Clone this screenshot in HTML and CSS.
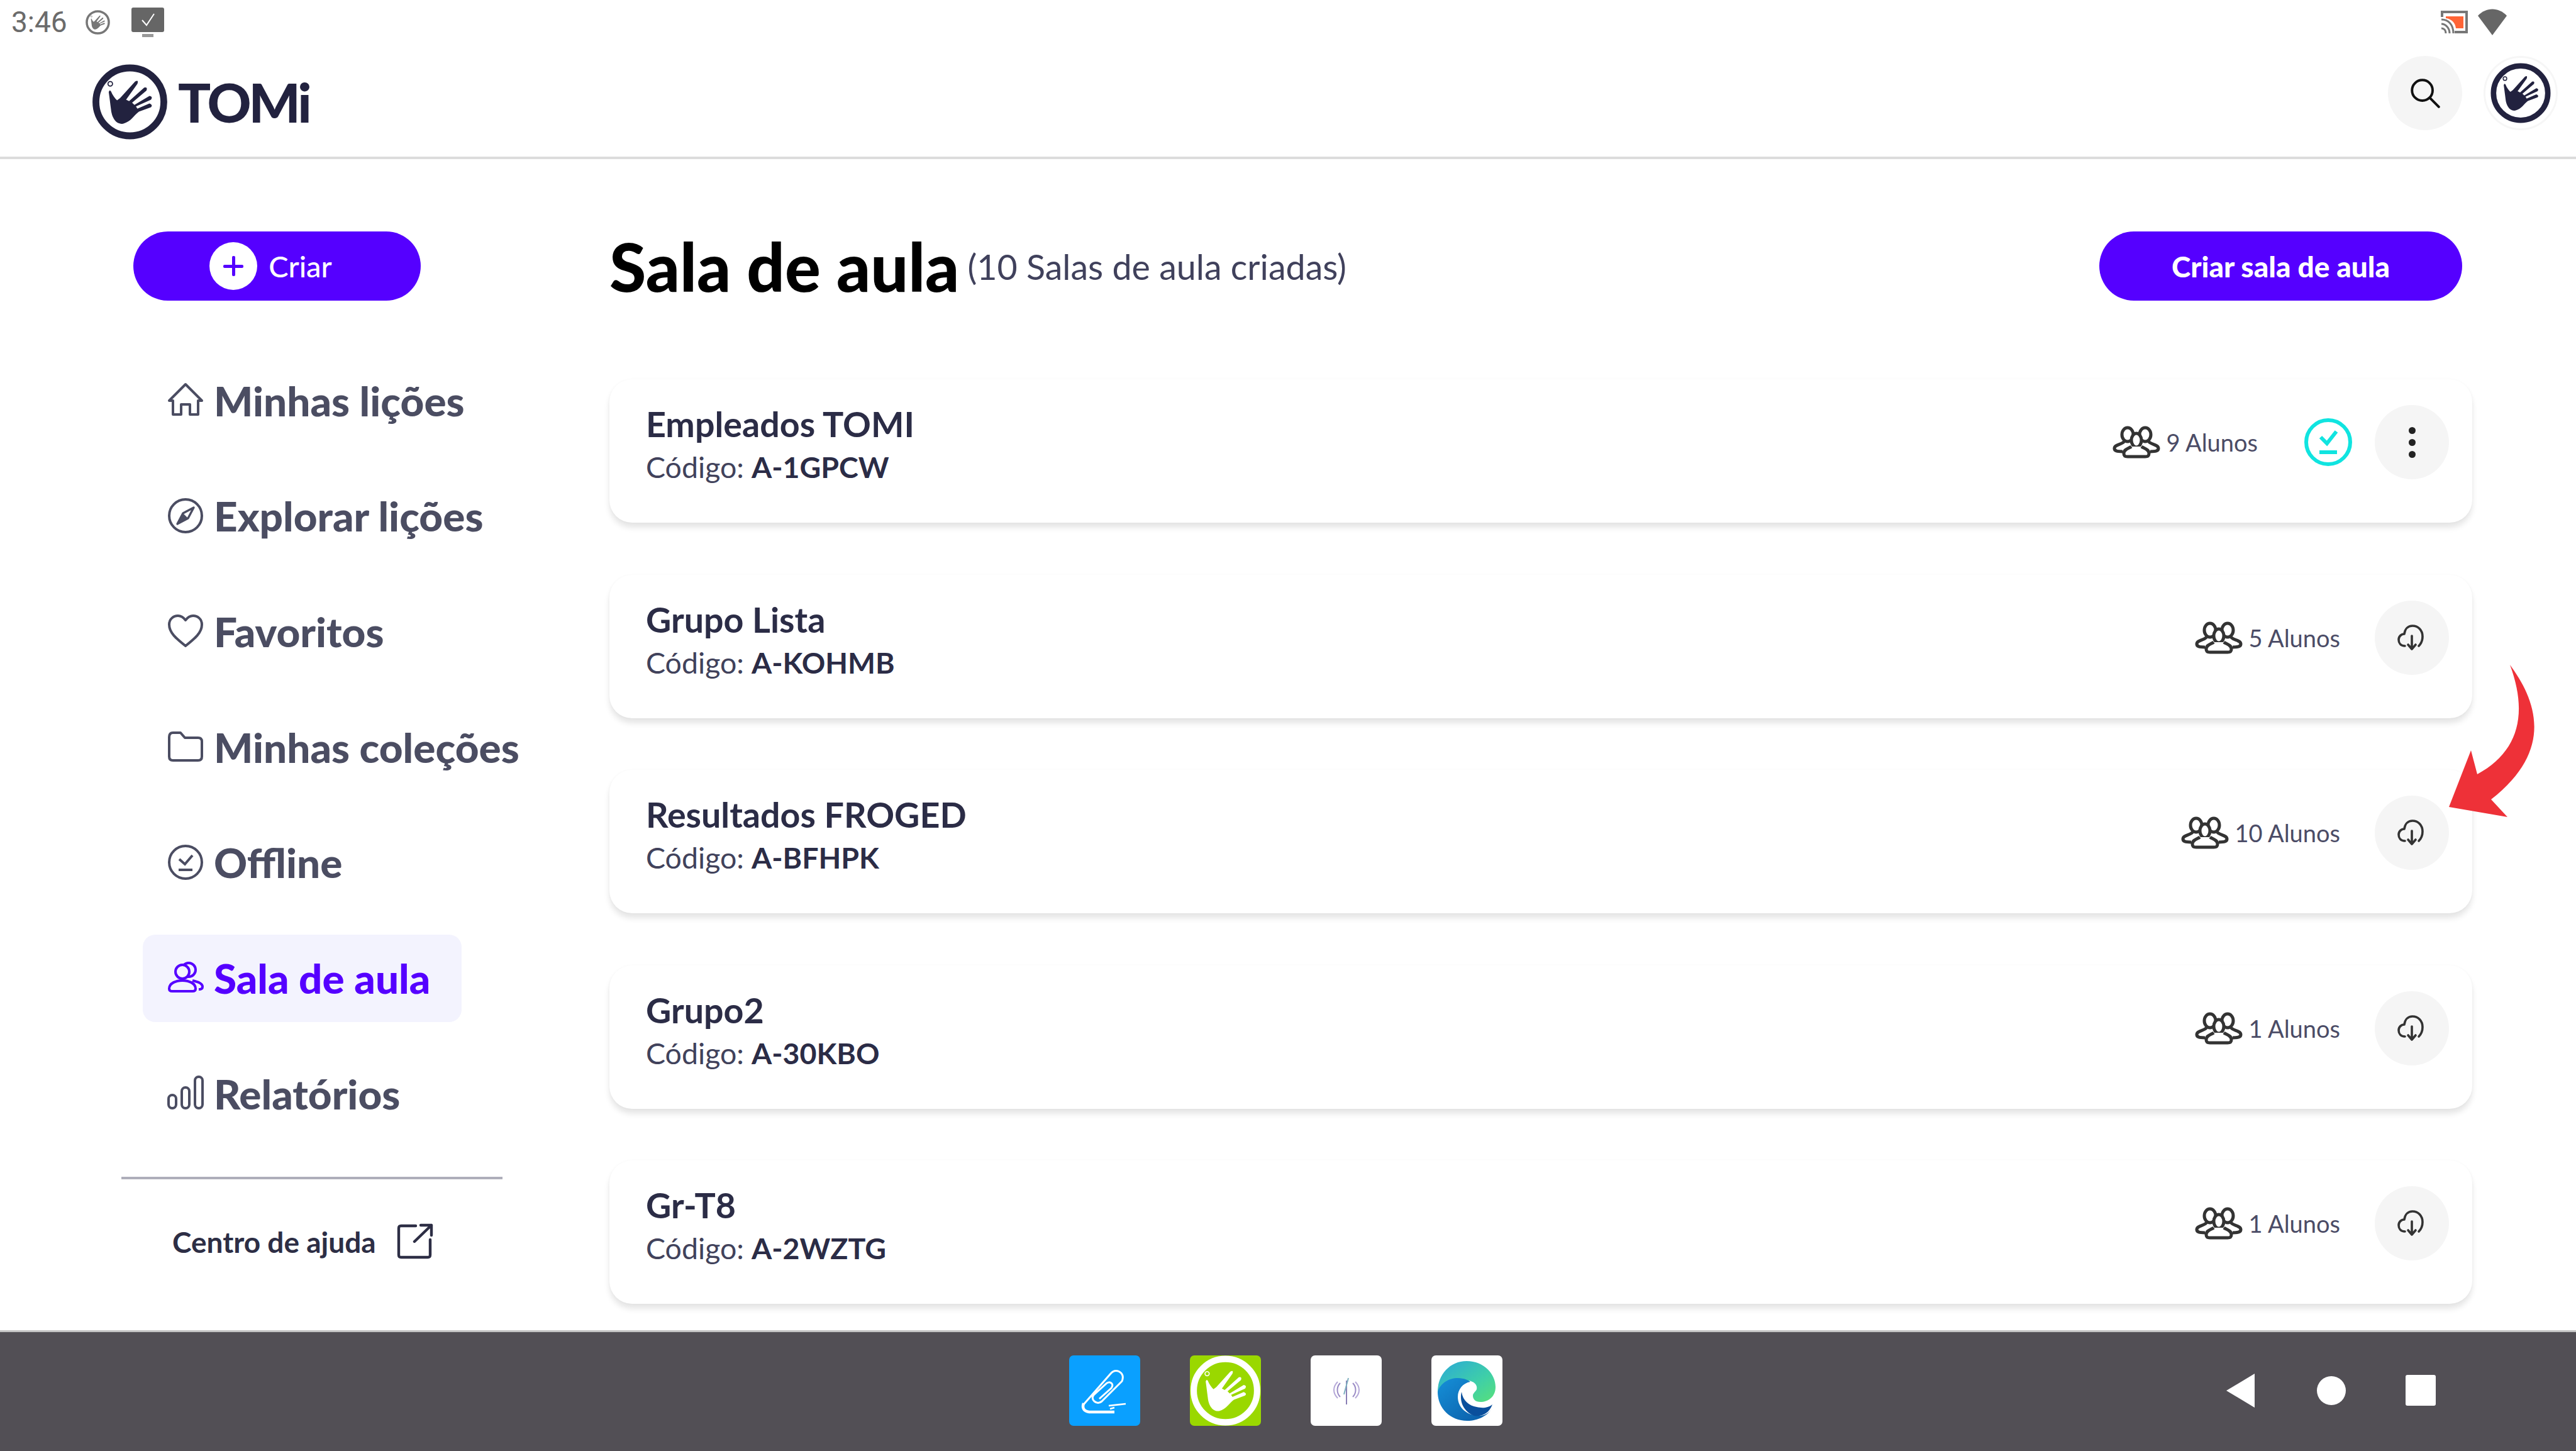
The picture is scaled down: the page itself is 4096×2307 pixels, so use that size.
FILE: index.html
```html
<!DOCTYPE html>
<html lang="pt">
  <head>
    <meta charset="UTF-8" />
    <title>TOMi - Sala de aula</title>
    <link rel="stylesheet" href="styles.css">
  </head>
  <body>
    <!-- shared icons -->
    <svg class="sprite" xmlns="http://www.w3.org/2000/svg">
      <symbol id="hand" viewBox="0 0 100 100">
        <path d="M25 36C27 41 30 45 33 48L37 45L57 23Q62 20 60 26L45 47L49 49L69 31Q74 30 72 35L53 51L56 54L76 42Q81 43 78 47L58 56L60 59L76 52Q81 54 78 57L62 63C55 68 52 76 41 79C31 80 26 70 25 60C24 52 23 44 22 37Q23 33 25 36Z" fill="currentColor"/>
        <circle cx="24" cy="26" r="3" fill="none" stroke="currentColor" stroke-width="1.5"/>
      </symbol>
      <symbol id="logo" viewBox="0 0 100 100">
        <ellipse cx="50" cy="50" rx="45" ry="45" fill="none" stroke="currentColor" stroke-width="9"/>
        <use href="#hand" width="100" height="100"/>
      </symbol>
      <symbol id="group" viewBox="0 0 76 52">
        <g fill="none" stroke="currentColor" stroke-width="5">
          <ellipse cx="24" cy="14" rx="9" ry="11"/>
          <ellipse cx="52" cy="14" rx="9" ry="11"/>
          <path d="M19 24C17 30 3 29 3 36C3 40 7 41 16 41"/>
          <path d="M57 24C59 30 73 29 73 36C73 40 69 41 60 41"/>
          <ellipse cx="38" cy="23" rx="8" ry="11" fill="#fff"/>
          <path d="M30 33C26 36 18 37 18 44C18 48 20 49 24 49H52C56 49 58 48 58 44C58 37 50 36 46 33" fill="#fff"/>
        </g>
      </symbol>
      <symbol id="cloud" viewBox="0 0 48 48">
        <g fill="none" stroke="currentColor" stroke-width="3.6" stroke-linecap="round" stroke-linejoin="round">
          <path d="M13 37C6 37 3 32 3 27C3 22 7 18 12 18C13 10 18 5 25 5C34 5 41 12 41 22C41 28 39 33 35 37"/>
          <path d="M24 21V41M18 35L24 42L30 35"/>
        </g>
      </symbol>
    </svg>

    <div class="status-bar">
      <div class="status-left">
        <span class="clock">3:46</span>
        <svg class="status-logo"><use href="#logo"/></svg>
        <svg class="status-monitor" viewBox="0 0 52 47">
          <rect x="0" y="0" width="52" height="39" rx="3" fill="#666"/>
          <rect x="17" y="42" width="18" height="5" fill="#999"/>
          <path d="M17 20L24 28L36 10" fill="none" stroke="#fff" stroke-width="2"/>
        </svg>
      </div>
      <div class="status-right">
        <svg class="status-cast" viewBox="0 0 43 36">
          <path d="M2 10V2H41V34H22" fill="none" stroke="#777" stroke-width="4"/>
          <path d="M8 9H36V28H24C23 19 17 13 8 12Z" fill="#ff6436"/>
          <path d="M1 14C12 14 20 22 20 36M1 21C8 21 14 28 14 36M1 28C5 28 8 31 8 36" fill="none" stroke="#777" stroke-width="3"/>
        </svg>
        <svg class="status-wifi" viewBox="0 0 46 42"><path d="M0 11C13 -3 33 -3 46 11L23 42Z" fill="#666"/></svg>
      </div>
    </div>

    <header class="topbar">
      <div class="brand">
        <svg class="brand-mark"><use href="#logo"/></svg>
        <span class="brand-name">TOMi</span>
      </div>
      <div class="topbar-actions">
        <div class="round-btn">
          <svg class="search-icon" viewBox="0 0 44 44">
            <circle cx="18" cy="18" r="15" fill="none" stroke="#111" stroke-width="3.6"/>
            <path d="M29 29L42 42" stroke="#111" stroke-width="3.6" stroke-linecap="round"/>
          </svg>
        </div>
        <div class="avatar"><svg class="avatar-mark"><use href="#logo"/></svg></div>
      </div>
    </header>

    <main class="layout">
      <aside class="sidebar">
        <button class="create-btn">
          <span class="create-plus"></span>
          Criar
        </button>

        <nav class="side-nav">
          <a class="nav-item">
            <svg class="nav-icon" viewBox="0 0 58 58"><path d="M3 30L29 4L55 30L49 30V52H36V36H22V52H9V30Z" fill="none" stroke="currentColor" stroke-width="4" stroke-linejoin="round"/></svg>
            Minhas lições
          </a>
          <a class="nav-item">
            <svg class="nav-icon" viewBox="0 0 58 58">
              <circle cx="29" cy="29" r="26" fill="none" stroke="currentColor" stroke-width="4"/>
              <path d="M42 16L33 33L16 42L25 25Z" fill="none" stroke="currentColor" stroke-width="3.4" stroke-linejoin="round"/>
              <path d="M25 25L16 42L33 33Z" fill="currentColor"/>
            </svg>
            Explorar lições
          </a>
          <a class="nav-item">
            <svg class="nav-icon" viewBox="0 0 58 58"><path d="M29 53C14 41 3 32 3 19C3 10 10 5 17 5C22 5 26 8 29 12C32 8 36 5 41 5C48 5 55 10 55 19C55 32 44 41 29 53Z" fill="none" stroke="currentColor" stroke-width="4" stroke-linejoin="round"/></svg>
            Favoritos
          </a>
          <a class="nav-item">
            <svg class="nav-icon" viewBox="0 0 58 58"><path d="M3 14C3 9 5 7 9 7H21L28 15H49C53 15 55 17 55 21V45C55 49 53 51 49 51H9C5 51 3 49 3 45Z" fill="none" stroke="currentColor" stroke-width="4" stroke-linejoin="round"/></svg>
            Minhas coleções
          </a>
          <a class="nav-item">
            <svg class="nav-icon" viewBox="0 0 58 58">
              <circle cx="29" cy="29" r="26" fill="none" stroke="currentColor" stroke-width="4"/>
              <path d="M19 24L28 32L40 18M18 41H40" fill="none" stroke="currentColor" stroke-width="4"/>
            </svg>
            Offline
          </a>
          <a class="nav-item active">
            <svg class="nav-icon" viewBox="0 0 58 58" fill="none" stroke="currentColor" stroke-width="4">
              <circle cx="34" cy="17" r="11"/>
              <circle cx="24" cy="20" r="11" fill="#f3f3fe"/>
              <path d="M40 34C48 36 56 38 56 44C56 47 54 48 50 48"/>
              <path d="M3 47C3 38 14 34 24 34C34 34 45 38 45 47C45 50 43 51 40 51H8C5 51 3 50 3 47Z" fill="#f3f3fe"/>
            </svg>
            Sala de aula
          </a>
          <a class="nav-item">
            <svg class="nav-icon" viewBox="0 0 58 58" fill="none" stroke="currentColor" stroke-width="4">
              <rect x="2" y="32" width="12" height="21" rx="6"/>
              <rect x="23" y="20" width="12" height="33" rx="6"/>
              <rect x="44" y="3" width="12" height="50" rx="6"/>
            </svg>
            Relatórios
          </a>
        </nav>

        <div class="side-divider"></div>

        <a class="help-link">
          Centro de ajuda
          <svg class="help-icon" viewBox="0 0 58 58" fill="none" stroke="currentColor" stroke-width="4.4" stroke-linecap="round" stroke-linejoin="round">
            <path d="M30 4H7C4 4 3 5 3 8V50C3 53 4 54 7 54H49C52 54 53 53 53 50V26"/>
            <path d="M55 3L28 29M38 3H55V19"/>
          </svg>
        </a>
      </aside>

      <section class="content">
        <div class="page-head">
          <div class="page-title">
            <h1>Sala de aula</h1>
            <span class="page-count">(10 Salas de aula criadas)</span>
          </div>
          <button class="primary-btn">Criar sala de aula</button>
        </div>

        <div class="room-list">
          <div class="room-card">
            <div class="room-info">
              <div class="room-name">Empleados TOMI</div>
              <div class="room-code">Código: <b>A-1GPCW</b></div>
            </div>
            <div class="room-meta">
              <svg class="group-icon"><use href="#group"/></svg>
              <span class="room-count">9 Alunos</span>
            </div>
            <svg class="saved-badge" viewBox="0 0 78 78" fill="none" stroke="#10e4e0" stroke-width="6">
              <circle cx="39" cy="39" r="35"/>
              <path d="M27 31L37 41L52 22M25 55H53"/>
            </svg>
            <div class="round-btn small">
              <span class="kebab"><i></i><i></i><i></i></span>
            </div>
          </div>

          <div class="room-card">
            <div class="room-info">
              <div class="room-name">Grupo Lista</div>
              <div class="room-code">Código: <b>A-KOHMB</b></div>
            </div>
            <div class="room-meta">
              <svg class="group-icon"><use href="#group"/></svg>
              <span class="room-count">5 Alunos</span>
            </div>
            <div class="round-btn small"><svg class="cloud-icon"><use href="#cloud"/></svg></div>
          </div>

          <div class="room-card">
            <div class="room-info">
              <div class="room-name">Resultados FROGED</div>
              <div class="room-code">Código: <b>A-BFHPK</b></div>
            </div>
            <div class="room-meta">
              <svg class="group-icon"><use href="#group"/></svg>
              <span class="room-count">10 Alunos</span>
            </div>
            <div class="round-btn small"><svg class="cloud-icon"><use href="#cloud"/></svg></div>
          </div>

          <div class="room-card">
            <div class="room-info">
              <div class="room-name">Grupo2</div>
              <div class="room-code">Código: <b>A-30KBO</b></div>
            </div>
            <div class="room-meta">
              <svg class="group-icon"><use href="#group"/></svg>
              <span class="room-count">1 Alunos</span>
            </div>
            <div class="round-btn small"><svg class="cloud-icon"><use href="#cloud"/></svg></div>
          </div>

          <div class="room-card">
            <div class="room-info">
              <div class="room-name">Gr-T8</div>
              <div class="room-code">Código: <b>A-2WZTG</b></div>
            </div>
            <div class="room-meta">
              <svg class="group-icon"><use href="#group"/></svg>
              <span class="room-count">1 Alunos</span>
            </div>
            <div class="round-btn small"><svg class="cloud-icon"><use href="#cloud"/></svg></div>
          </div>
        </div>
      </section>
    </main>

    <footer class="taskbar">
      <div class="dock">
        <div class="app app-blue">
          <svg viewBox="0 0 113 112" fill="none" stroke="#fff">
            <path d="M23 78L66 29Q72 22 80 26Q88 31 84 41L52 73Q46 78 40 73Q35 68 39 63L60 44Q65 41 68 45Q70 48 67 52L48 69" stroke-width="3"/>
            <path d="M23 76Q19 88 32 90H72" stroke-width="4.5"/>
            <path d="M63 80L90 77M65 85L72 83" stroke-width="2.6"/>
          </svg>
        </div>
        <div class="app app-green"><svg class="app-mark"><use href="#logo"/></svg></div>
        <div class="app app-white">
          <svg viewBox="0 0 113 112" fill="none" stroke-width="2">
            <path d="M57 40V78" stroke="#8a7fb5"/>
            <path d="M60 36L53 62" stroke="#7fb0c0"/>
            <path d="M47 44C41 50 41 60 47 66M67 44C73 50 73 60 67 66" stroke="#9a8bc5"/>
            <path d="M43 42C35 50 35 60 43 68M71 42C79 50 79 60 71 68" stroke="#b5a8d8"/>
          </svg>
        </div>
        <div class="app app-white">
          <svg viewBox="0 0 113 112">
            <defs>
              <linearGradient id="edgeTop" x1="0" y1="0" x2="1" y2="1">
                <stop offset="0" stop-color="#2aa8d8"/>
                <stop offset="0.6" stop-color="#3fcfa8"/>
                <stop offset="1" stop-color="#58e07a"/>
              </linearGradient>
              <linearGradient id="edgeLow" x1="0" y1="0" x2="1" y2="1">
                <stop offset="0" stop-color="#1590d8"/>
                <stop offset="1" stop-color="#0b5aa5"/>
              </linearGradient>
            </defs>
            <path d="M10 58C10 30 30 9 56 9C84 9 102 30 102 50C102 66 90 74 78 74C70 74 66 70 66 64C66 60 70 58 72 54C74 46 66 40 56 40C40 40 30 52 28 66C20 72 12 68 10 58Z" fill="url(#edgeTop)"/>
            <path d="M10 58C14 44 28 36 42 36C52 36 60 40 62 42C50 44 42 54 42 66C42 84 58 96 76 96C84 96 92 92 96 84C90 96 74 104 57 104C30 104 10 84 10 58Z" fill="url(#edgeLow)"/>
            <path d="M48 58C44 74 52 90 68 96C80 98 92 92 97 78C90 84 80 84 72 82C60 80 50 72 48 58Z" fill="#0a4f9c"/>
          </svg>
        </div>
      </div>
      <div class="sys-nav">
        <span class="nav-back"></span>
        <span class="nav-home"></span>
        <span class="nav-recent"></span>
      </div>
    </footer>

    <!-- red pointer drawn over the list -->
    <svg class="pointer" viewBox="0 0 160 260">
      <path d="M111 7C150 60 185 140 81 221L107 249L14 233L49 143L59 181C125 145 140 85 111 7Z" fill="#ee3138"/>
    </svg>
  </body>
</html>
```

FILE: styles.css
```css
* {
  box-sizing: border-box;
}

html, body {
  margin: 0;
  padding: 0;
  width: 4096px;
  height: 2307px;
  overflow: hidden;
}

body {
  position: relative;
  display: flex;
  flex-direction: column;
  background: #fff;
  font-family: "Lato", "Liberation Sans", sans-serif;
  color: #2b2c46;
}

.sprite {
  width: 0;
  height: 0;
  position: absolute;
}

/* android status bar */
.status-bar {
  height: 62px;
  display: flex;
  justify-content: space-between;
  align-items: center;
  padding: 8px 110px 0 18px;
}

.status-left, .status-right {
  display: flex;
  align-items: center;
}

.clock {
  font-family: "Roboto", sans-serif;
  font-size: 46px;
  color: #6b6b6b;
  margin-right: 29px;
}

.status-logo {
  width: 39px;
  height: 39px;
  color: #777;
  margin-right: 34px;
}

.status-monitor {
  width: 52px;
  height: 47px;
}

.status-cast {
  width: 43px;
  height: 36px;
  margin-right: 16px;
}

.status-wifi {
  width: 46px;
  height: 42px;
}

/* app header */
.topbar {
  height: 191px;
  display: flex;
  justify-content: space-between;
  align-items: flex-start;
  padding: 0 29px 0 144px;
  border-bottom: 4px solid #dcdcdc;
}

.brand {
  display: flex;
  align-items: center;
  margin-top: 40px;
  color: #22223f;
}

.brand-mark {
  width: 125px;
  height: 120px;
}

.brand-name {
  font-size: 86.5px;
  font-weight: 900;
  letter-spacing: -4px;
  margin-left: 14px;
  line-height: 1;
}

.topbar-actions {
  display: flex;
  gap: 34px;
  margin-top: 27px;
}

.round-btn {
  width: 118px;
  height: 118px;
  border-radius: 50%;
  background: #f5f5f5;
  display: flex;
  align-items: center;
  justify-content: center;
}

.search-icon {
  width: 48px;
  height: 48px;
}

.avatar {
  width: 118px;
  height: 118px;
  border-radius: 50%;
  border: 3px solid #f6f6f6;
  display: flex;
  align-items: center;
  justify-content: center;
  color: #22223f;
}

.avatar-mark {
  width: 96px;
  height: 96px;
}

/* page */
.layout {
  flex: 1;
  display: flex;
  min-height: 0;
  overflow: hidden;
}

.sidebar {
  width: 969px;
  flex: none;
  padding: 115px 0 0 193px;
}

.create-btn {
  width: 457px;
  height: 110px;
  margin-left: 19px;
  border: none;
  border-radius: 55px;
  background: #5500ff;
  color: #fff;
  font-family: inherit;
  font-size: 47px;
  font-weight: 500;
  display: flex;
  align-items: center;
  justify-content: center;
  gap: 18px;
  padding: 0 20px 0 0;
}

.create-plus {
  width: 76px;
  height: 76px;
  border-radius: 50%;
  background: #fff;
  position: relative;
}

.create-plus::before,
.create-plus::after {
  content: "";
  position: absolute;
  background: #5500ff;
  border-radius: 2px;
}

.create-plus::before {
  left: 22px;
  right: 22px;
  top: 36px;
  height: 5px;
}

.create-plus::after {
  top: 22px;
  bottom: 22px;
  left: 36px;
  width: 5px;
}

.side-nav {
  display: flex;
  flex-direction: column;
  gap: 44.7px;
  margin: 90px 0 0 34px;
}

.nav-item {
  width: 507px;
  height: 139px;
  padding: 0 0 3px 39px;
  border-radius: 20px;
  display: flex;
  align-items: center;
  gap: 16px;
  font-size: 65.6px;
  font-weight: 900;
  color: #4b4d62;
  white-space: nowrap;
}

.nav-item.active {
  background: #f3f3fe;
  color: #5500ff;
}

.nav-icon {
  width: 58px;
  height: 58px;
  flex: none;
}

.side-divider {
  width: 606px;
  height: 4px;
  background: #aeaeba;
  margin-top: 62px;
}

.help-link {
  display: flex;
  align-items: center;
  margin: 70px 0 0 81px;
  font-size: 46px;
  font-weight: 700;
  color: #2d2e45;
  white-space: nowrap;
}

.help-icon {
  width: 58px;
  height: 58px;
  margin-left: 33px;
}

.content {
  flex: 1;
  padding: 115px 165px 0 0;
}

.page-head {
  height: 110px;
  display: flex;
  justify-content: space-between;
  align-items: center;
  margin-bottom: 125px;
}

.page-title {
  display: flex;
  align-items: center;
  gap: 13px;
}

.page-title h1 {
  margin: 0;
  font-size: 106px;
  font-weight: 900;
  color: #000;
  line-height: 1.1;
}

.page-count {
  font-size: 55.6px;
  color: #40415c;
}

.primary-btn {
  width: 577px;
  height: 110px;
  margin-right: 16px;
  border: none;
  border-radius: 55px;
  background: #5500ff;
  color: #fff;
  font-family: inherit;
  font-size: 46px;
  font-weight: 900;
}

.room-list {
  display: flex;
  flex-direction: column;
  gap: 82.5px;
}

.room-card {
  height: 228px;
  flex: none;
  display: flex;
  align-items: center;
  padding: 0 37px 28px 58px;
  background: #fff;
  border-radius: 36px;
  box-shadow: 0 8px 10px rgba(0, 0, 0, 0.1), 0 0 4px rgba(0, 0, 0, 0.03);
}

.room-info {
  flex: 1;
  margin-top: 10px;
}

.room-name {
  font-size: 55.6px;
  font-weight: 700;
  line-height: 68px;
  color: #2b2c46;
}

.room-code {
  font-size: 46.5px;
  line-height: 68px;
  color: #41425b;
}

.room-code b {
  font-weight: 700;
  color: #2b2c46;
}

.room-meta {
  display: flex;
  align-items: center;
  gap: 9px;
  margin-right: 55px;
}

.group-icon {
  width: 76px;
  height: 52px;
  color: #333;
}

.room-count {
  font-size: 38px;
  color: #4b4c66;
}

.saved-badge {
  width: 78px;
  height: 78px;
  margin: 0 35px 0 18px;
}

.round-btn.small {
  width: 118px;
  height: 118px;
}

.kebab {
  display: flex;
  flex-direction: column;
  gap: 8px;
}

.kebab i {
  display: block;
  width: 11px;
  height: 11px;
  border-radius: 50%;
  background: #222;
}

.cloud-icon {
  width: 48px;
  height: 48px;
  color: #333;
}

/* bottom taskbar */
.taskbar {
  height: 192px;
  flex: none;
  display: flex;
  align-items: center;
  padding: 0 0 4px 1700px;
  background: #524f55;
  border-top: 3px solid #c4c4c4;
}

.dock {
  display: flex;
  gap: 79px;
}

.app {
  width: 113px;
  height: 112px;
  border-radius: 7px;
}

.app svg {
  display: block;
  width: 100%;
  height: 100%;
}

.app-blue {
  background: #0aa0ff;
}

.app-green {
  background: #9ad800;
  color: #fff;
}

.app-white {
  background: #fff;
}

.sys-nav {
  display: flex;
  align-items: center;
  margin-left: 1151px;
}

.nav-back {
  width: 0;
  height: 0;
  border-style: solid;
  border-width: 27px 45px 27px 0;
  border-color: transparent #fff transparent transparent;
}

.nav-home {
  width: 46px;
  height: 46px;
  border-radius: 50%;
  background: #fff;
  margin-left: 99px;
}

.nav-recent {
  width: 48px;
  height: 49px;
  border-radius: 3px;
  background: #fff;
  margin-left: 95px;
}

.pointer {
  position: absolute;
  left: 3880px;
  top: 1050px;
  width: 160px;
  height: 260px;
}
```
